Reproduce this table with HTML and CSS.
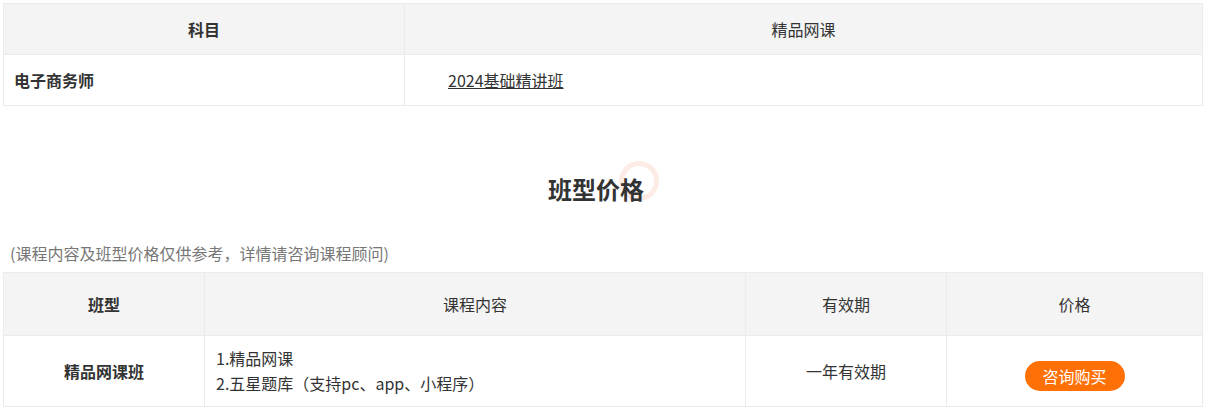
FILE: index.html
```html
<!DOCTYPE html>
<html lang="zh-CN">
<head>
  <meta charset="UTF-8">
  <meta name="viewport" content="width=device-width, initial-scale=1.0">
  <title>班型价格</title>
  <link rel="stylesheet" href="styles.css">
</head>
<body>
  <table class="subject-table">
    <tr>
      <th class="col-subject">科目</th>
      <th class="col-course normal">精品网课</th>
    </tr>
    <tr>
      <td class="bold">电子商务师</td>
      <td class="course-link"><a href="#">2024基础精讲班</a></td>
    </tr>
  </table>

  <div class="section-title">
    <h2><span>班型价格</span></h2>
  </div>

  <p class="note">(课程内容及班型价格仅供参考，详情请咨询课程顾问)</p>

  <table class="price-table">
    <tr>
      <th class="col-type">班型</th>
      <th class="col-content normal">课程内容</th>
      <th class="col-period normal">有效期</th>
      <th class="col-price normal">价格</th>
    </tr>
    <tr>
      <td class="bold center">精品网课班</td>
      <td class="content">1.精品网课<br>2.五星题库（支持pc、app、小程序）</td>
      <td class="center">一年有效期</td>
      <td class="center"><button class="buy-btn">咨询购买</button></td>
    </tr>
  </table>
</body>
</html>
```

FILE: styles.css
```css
body {
  margin: 0;
  padding: 3px;
  font-family: "Noto Sans CJK SC", "Liberation Sans", sans-serif;
  font-size: 16px;
  color: #333;
  background: #fff;
}
table {
  width: 1200px;
  border-collapse: collapse;
}
th, td {
  border: 1px solid #ebebeb;
  padding: 0;
  vertical-align: middle;
  line-height: 24px;
}
th {
  background-color: #f4f4f4;
  font-weight: bold;
  text-align: center;
}
.normal {
  font-weight: normal;
}
.bold {
  font-weight: bold;
}
.center {
  text-align: center;
}

/* subject table */
.subject-table th,
.subject-table td {
  height: 50px;
}
.subject-table .col-subject {
  width: 400px;
}
.subject-table td.bold {
  padding-left: 10px;
}
.course-link {
  padding-left: 43px;
}
.course-link a {
  color: #333;
  text-decoration: underline;
}

/* title */
.section-title {
  text-align: center;
  margin: 67px 0 36px;
}
.section-title h2 {
  margin: 0;
  font-size: 24px;
  line-height: 32px;
}
.section-title span {
  position: relative;
  z-index: 0;
  display: inline-block;
  padding-right: 15px;
}
.section-title span::after {
  content: '';
  position: absolute;
  right: 0;
  top: -12px;
  width: 30px;
  height: 30px;
  border: 5px solid #fdebe5;
  border-radius: 50%;
  z-index: -1;
}

.note {
  margin: 0 0 7px;
  padding-left: 7px;
  color: #777;
  line-height: 24px;
}

/* price table */
.price-table th {
  height: 62px;
}
.price-table td {
  height: 70px;
}
.col-type {
  width: 200px;
}
.col-content {
  width: 540px;
}
.col-period {
  width: 200px;
}
.content {
  padding-left: 11px;
  line-height: 25px;
}
.buy-btn {
  width: 100px;
  height: 30px;
  margin-top: 9px;
  border: none;
  border-radius: 15px;
  background-color: #ff7007;
  color: #fff;
  font-family: inherit;
  font-size: 16px;
  cursor: pointer;
}
```
